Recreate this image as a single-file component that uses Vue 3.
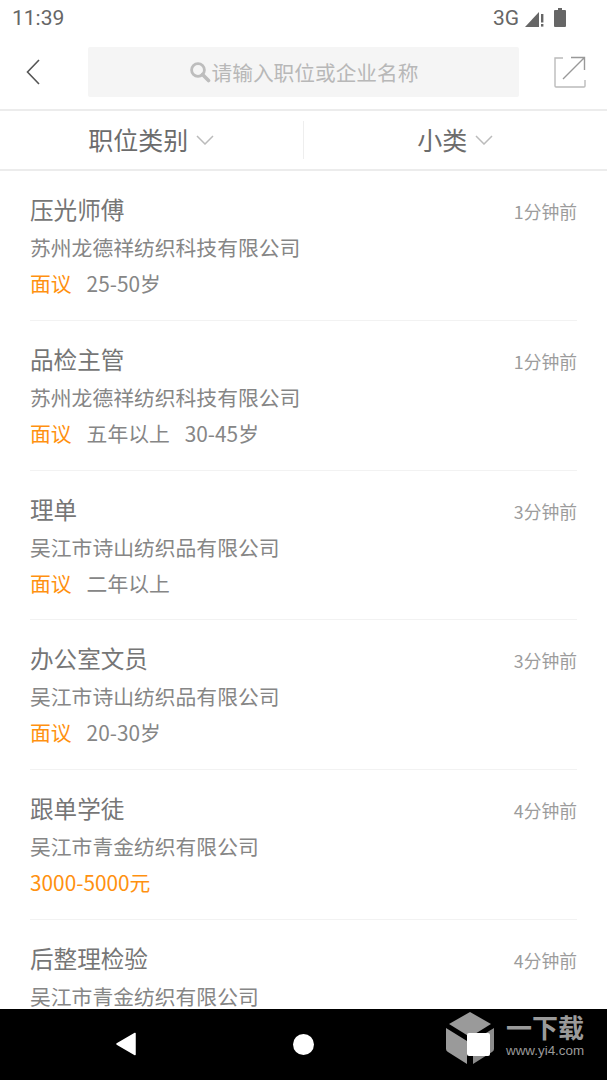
<script setup>
const jobs = [
  { title: "压光师傅", company: "苏州龙德祥纺织科技有限公司", pay: "面议", tags: ["25-50岁"], time: "1分钟前" },
  { title: "品检主管", company: "苏州龙德祥纺织科技有限公司", pay: "面议", tags: ["五年以上", "30-45岁"], time: "1分钟前" },
  { title: "理单", company: "吴江市诗山纺织品有限公司", pay: "面议", tags: ["二年以上"], time: "3分钟前" },
  { title: "办公室文员", company: "吴江市诗山纺织品有限公司", pay: "面议", tags: ["20-30岁"], time: "3分钟前" },
  { title: "跟单学徒", company: "吴江市青金纺织有限公司", pay: "3000-5000元", tags: [], time: "4分钟前" },
  { title: "后整理检验", company: "吴江市青金纺织有限公司", pay: "", tags: [], time: "4分钟前" },
];
</script>

<template>
  <div class="screen">
    <div class="status-bar">
      <span class="clock">11:39</span>
      <div class="status-icons">
        <span class="net">3G</span>
        <svg class="signal" width="19" height="18" viewBox="0 0 19 18">
          <path d="M0 18 L14 3 V18 Z" fill="#666" />
          <rect x="16" y="5" width="2.4" height="8.5" fill="#666" />
          <rect x="16" y="15" width="2.4" height="2.6" fill="#666" />
        </svg>
        <svg class="battery" width="12" height="19" viewBox="0 0 12 19">
          <path d="M4 0 H8 V2 H11 Q12 2 12 3 V18 Q12 19 11 19 H1 Q0 19 0 18 V3 Q0 2 1 2 H4 Z" fill="#666" />
        </svg>
      </div>
    </div>

    <div class="header">
      <svg class="back" width="16" height="28" viewBox="0 0 16 28">
        <path d="M14 2 L2.5 14 L14 26" fill="none" stroke="#555" stroke-width="1.6" />
      </svg>
      <div class="search">
        <svg width="22" height="22" viewBox="0 0 22 22">
          <circle cx="9" cy="9" r="6.4" fill="none" stroke="#bdbdbd" stroke-width="2.8" />
          <path d="M13.5 13.5 L19.5 19.5" stroke="#bdbdbd" stroke-width="3.6" stroke-linecap="round" />
        </svg>
        <span>请输入职位或企业名称</span>
      </div>
      <svg class="share" width="32" height="32" viewBox="0 0 32 32">
        <path d="M9 2 H1 V30 Q1 31 2 31 H30 Q31 31 31 30 V24" fill="none" stroke="#bbb" stroke-width="1.4" />
        <path d="M9 23 L30 2 M17 1.5 H30.5 V14" fill="none" stroke="#999" stroke-width="1.4" />
      </svg>
    </div>

    <div class="filters">
      <div class="filter left">
        <span>职位类别</span>
        <svg width="18" height="10" viewBox="0 0 18 10"><path d="M1 1 L9 9 L17 1" fill="none" stroke="#bbb" stroke-width="1.5" /></svg>
      </div>
      <div class="filter right">
        <span>小类</span>
        <svg width="18" height="10" viewBox="0 0 18 10"><path d="M1 1 L9 9 L17 1" fill="none" stroke="#bbb" stroke-width="1.5" /></svg>
      </div>
    </div>

    <div class="list">
      <div v-for="job in jobs" :key="job.title" class="job">
        <div class="top-row">
          <span class="title">{{ job.title }}</span>
          <span class="time">{{ job.time }}</span>
        </div>
        <div class="company">{{ job.company }}</div>
        <div class="meta">
          <span class="pay">{{ job.pay }}</span>
          <span v-for="tag in job.tags" :key="tag">{{ tag }}</span>
        </div>
      </div>
    </div>

    <div class="nav-bar">
      <svg class="nav-back" width="22" height="24" viewBox="0 0 22 24">
        <path d="M20 1.5 V22.5 L2 12 Z" fill="#fff" stroke="#fff" stroke-width="1.5" stroke-linejoin="round" />
      </svg>
      <div class="nav-home"></div>
    </div>

    <div class="watermark">
      <svg width="48" height="52" viewBox="0 0 48 52">
        <path d="M24 0 L45 12 L24 25 L3 12 Z" fill="#9a9a9a" />
        <path d="M0 16 L21 29 V52 L2 40 Q0 39 0 37 Z" fill="#9a9a9a" />
        <path d="M48 16 L27 29 V52 L46 40 Q48 39 48 37 Z" fill="#8c8c8c" />
      </svg>
      <div class="wm-text">
        <span class="wm-name">一下载</span>
        <span class="wm-url">www.yi4.com</span>
      </div>
    </div>
    <div class="nav-recent"></div>
  </div>
</template>

<style scoped>
.screen {
  position: relative;
  width: 607px;
  height: 1080px;
  overflow: hidden;
  background: #fff;
  font-family: "Noto Sans CJK SC", "Noto Sans", sans-serif;
  display: flex;
  flex-direction: column;
}

.status-bar {
  height: 37px;
  flex: none;
  padding: 0 41px 2px 12px;
  display: flex;
  align-items: center;
  justify-content: space-between;
  box-sizing: border-box;
  color: #666;
}

.clock,
.net {
  font-family: Roboto, sans-serif;
  font-size: 21px;
}

.status-icons {
  display: flex;
  align-items: center;
}

.signal {
  margin-left: 6px;
}

.battery {
  margin-left: 10px;
}

.header {
  height: 74px;
  flex: none;
  box-sizing: border-box;
  display: flex;
  align-items: center;
  padding: 0 21px 2px 25px;
  border-bottom: 2px solid #ececec;
}

.back {
  flex: none;
}

.search {
  width: 431px;
  height: 50px;
  margin-left: 47px;
  background: #f5f5f5;
  border-radius: 2px;
  display: flex;
  align-items: center;
  justify-content: center;
  gap: 1px;
  font-size: 20.7px;
  color: #b8b8b8;
}

.share {
  margin-left: auto;
}

.filters {
  height: 60px;
  flex: none;
  box-sizing: border-box;
  display: flex;
  align-items: center;
  border-bottom: 2px solid #ececec;
}

.filter {
  width: 50%;
  height: 38px;
  display: flex;
  align-items: center;
  justify-content: center;
  gap: 8px;
  font-size: 25px;
  color: #6c6c6c;
}

.filter span {
  margin-bottom: 2px;
}

.filter.left {
  border-right: 1px solid #eee;
  box-sizing: border-box;
}

.list {
  flex: 1;
  min-height: 0;
  overflow: hidden;
  padding: 0 30px;
}

.job {
  height: 149.8px;
  box-sizing: border-box;
  border-bottom: 1px solid #f2f2f2;
  padding-top: 18px;
}

.top-row {
  display: flex;
  justify-content: space-between;
  align-items: center;
  height: 40px;
}

.title {
  font-size: 23.6px;
  color: #767676;
}

.time {
  font-size: 17.8px;
  color: #9c9c9c;
  padding-top: 4px;
}

.company {
  height: 36px;
  line-height: 36px;
  font-size: 20.8px;
  color: #868686;
}

.meta {
  height: 36px;
  display: flex;
  align-items: center;
  gap: 15px;
  font-size: 20.8px;
  color: #868686;
}

.pay {
  color: #ff9110;
}

.nav-bar {
  height: 71px;
  flex: none;
  background: #000;
  position: relative;
}

.nav-back {
  position: absolute;
  left: 115px;
  top: 23px;
}

.nav-home {
  position: absolute;
  left: 293px;
  top: 25px;
  width: 21px;
  height: 21px;
  border-radius: 50%;
  background: #fff;
}

.nav-recent {
  position: absolute;
  left: 467px;
  top: 1033px;
  width: 23px;
  height: 23px;
  border-radius: 2px;
  background: #fff;
}

.watermark {
  position: absolute;
  left: 446px;
  top: 1012px;
  display: flex;
  align-items: center;
  gap: 12px;
  color: #9a9a9a;
}

.wm-text {
  display: flex;
  flex-direction: column;
  align-items: center;
  gap: 4px;
  margin-top: -4px;
}

.wm-name {
  font-size: 26px;
  font-weight: 700;
  line-height: 26px;
}

.wm-url {
  font-family: "Liberation Sans", sans-serif;
  font-size: 13.4px;
  line-height: 14px;
}
</style>

<style>
html,
body {
  margin: 0;
  background: #fff;
}
</style>
